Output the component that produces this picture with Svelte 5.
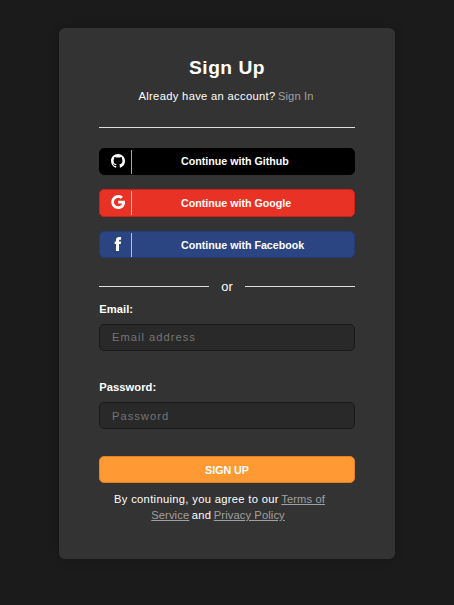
<script>
  const providers = [
    {
      id: 'github',
      label: 'Continue with Github',
      path: 'M8 0C3.58 0 0 3.58 0 8c0 3.54 2.29 6.53 5.47 7.59.4.07.55-.17.55-.38 0-.19-.01-.82-.01-1.49-2.01.37-2.53-.49-2.69-.94-.09-.23-.48-.94-.82-1.13-.28-.15-.68-.52-.01-.53.63-.01 1.08.58 1.23.82.72 1.21 1.87.87 2.33.66.07-.52.28-.87.51-1.07-1.78-.2-3.64-.89-3.64-3.95 0-.87.31-1.59.82-2.15-.08-.2-.36-1.02.08-2.12 0 0 .67-.21 2.2.82a7.6 7.6 0 0 1 4 0c1.53-1.04 2.2-.82 2.2-.82.44 1.1.16 1.92.08 2.12.51.56.82 1.27.82 2.15 0 3.07-1.87 3.75-3.65 3.95.29.25.54.73.54 1.48 0 1.07-.01 1.93-.01 2.2 0 .21.15.46.55.38A8.01 8.01 0 0 0 16 8c0-4.42-3.58-8-8-8z'
    },
    {
      id: 'google',
      label: 'Continue with Google',
      path: 'M8.16 6.55v3.1h4.38c-.45 1.95-2.1 3.15-4.38 3.15a4.8 4.8 0 1 1 3.1-8.47l2.35-2.3A8 8 0 1 0 8.16 16C12.8 16 16 12.8 16 8.2c0-.6-.06-1.15-.16-1.65z'
    },
    {
      id: 'facebook',
      label: 'Continue with Facebook',
      path: 'M5.7 16V8H4.2V5h1.5V3.4C5.7 1.1 7 0 9.3 0h2.2v3h-1.3c-.8 0-1 .3-1 1v1h2.3l-.3 3h-2v8z'
    }
  ];
</script>

<main>
  <section class="card">
    <h1>Sign Up</h1>
    <p class="account">Already have an account? <a href="#signin">Sign In</a></p>
    <div class="rule"></div>

    <div class="social">
      {#each providers as p}
        <button type="button" class={p.id}>
          <span class="icon"><svg viewBox="0 0 16 16" aria-hidden="true"><path d={p.path} /></svg></span>
          <span class="label">{p.label}</span>
        </button>
      {/each}
    </div>

    <div class="or"><span>or</span></div>

    <form>
      <label for="email">Email:</label>
      <input id="email" type="email" placeholder="Email address" />
      <label for="password">Password:</label>
      <input id="password" type="password" placeholder="Password" />
      <button type="button" class="submit">SIGN UP</button>
    </form>

    <p class="terms">By continuing, you agree to our <a href="#terms">Terms of Service</a> <span class="and">and</span> <a class="privacy" href="#privacy">Privacy Policy</a></p>
  </section>
</main>

<style>
  :global(body) {
    background: #1b1b1b;
  }
  main {
    box-sizing: border-box;
    height: 605px;
    padding-top: 28px;
    overflow: hidden;
    font-family: "Liberation Sans", Arial, sans-serif;
    color: #fff;
  }
  .card {
    box-sizing: border-box;
    width: 336px;
    height: 531px;
    margin: 0 auto;
    padding: 28px 40px 0;
    border-radius: 6px;
    background: #333;
    box-shadow: 0 0 12px rgba(0, 0, 0, 0.2);
  }
  h1 {
    margin: 0;
    font-size: 19.2px;
    line-height: 24px;
    letter-spacing: 0.5px;
    text-align: center;
  }
  .account {
    margin: 8px 0 0;
    padding-right: 2px;
    font-size: 11.2px;
    line-height: 16px;
    letter-spacing: 0.32px;
    text-align: center;
  }
  a {
    margin-left: -1px;
    color: #a0a0a0;
    text-decoration: none;
    letter-spacing: 0.1px;
  }
  .rule {
    height: 1px;
    margin-top: 23px;
    background: #ddd;
  }
  .social {
    display: flex;
    flex-direction: column;
    gap: 15px;
    margin-top: 20px;
  }
  button {
    box-sizing: border-box;
    display: flex;
    align-items: center;
    width: 100%;
    height: 27px;
    padding: 0;
    border: 1px solid #000;
    border-radius: 5px;
    font: bold 10.67px "Liberation Sans", Arial, sans-serif;
    color: #fff;
  }
  .github {
    background: #000;
  }
  .google {
    height: 28px;
    margin-top: -1px;
    border-color: #d21f14;
    background: #e83225;
  }
  .facebook {
    border-color: #213a78;
    background: #2b4582;
    margin-top: -1px;
  }
  .icon {
    box-sizing: border-box;
    display: flex;
    align-items: center;
    width: 32px;
    height: 24px;
    padding-left: 11px;
    padding-bottom: 2px;
    border-right: 1px solid rgba(255, 255, 255, 0.65);
  }
  svg {
    width: 14px;
    height: 14px;
    fill: #fff;
  }
  .label {
    padding-left: 49px;
  }
  .github .label {
    padding-bottom: 2px;
  }
  .or {
    display: flex;
    align-items: center;
    gap: 12px;
    height: 16px;
    margin-top: 20px;
    font-size: 12.8px;
  }
  .or::before,
  .or::after {
    content: "";
    flex: 1;
    height: 1px;
    background: #ddd;
  }
  form {
    display: flex;
    flex-direction: column;
    margin-top: 7px;
  }
  label {
    height: 16px;
    margin-bottom: 7px;
    padding-left: 0.3px;
    font-size: 11.2px;
    font-weight: bold;
    line-height: 16px;
    letter-spacing: 0.04px;
  }
  input {
    box-sizing: border-box;
    width: 100%;
    height: 27px;
    margin: 0 0 28px;
    padding: 0 12px;
    border: 1px solid #191919;
    border-radius: 5px;
    background: #292929;
    color: #fff;
    font: 11.2px "Liberation Sans", Arial, sans-serif;
    letter-spacing: 1px;
  }
  #email {
    padding-bottom: 2px;
  }
  input::placeholder {
    color: #757575;
  }
  .submit {
    justify-content: center;
    margin-top: -1px;
    border-color: #e58121;
    background: #ff9933;
  }
  .terms {
    margin: 8px 0 0;
    padding: 0 27px 0 12px;
    font-size: 11.2px;
    line-height: 16px;
    letter-spacing: 0.32px;
    text-align: center;
  }
  .terms a {
    text-decoration: underline;
  }
  .and {
    margin-left: -1px;
  }
  .terms .privacy {
    margin-right: 3px;
  }
</style>
